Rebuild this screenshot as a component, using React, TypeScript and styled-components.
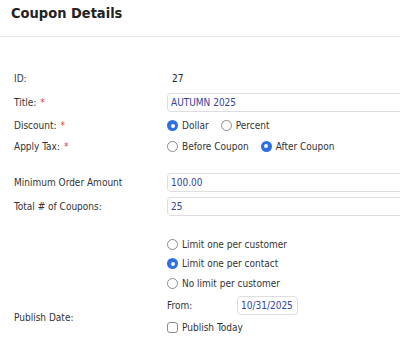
import React from "react";
import styled, { createGlobalStyle } from "styled-components";

const Global = createGlobalStyle`
  html, body { margin: 0; padding: 0; background: #fff; }
  body {
    font-family: "DejaVu Sans", Verdana, sans-serif;
    font-stretch: condensed;
    overflow: hidden;
  }
`;

const Page = styled.div`
  width: 400px;
  height: 348px;
  overflow: hidden;
  color: #333;
  font-size: 10px;
`;

const Header = styled.header`
  height: 37px;
  border-bottom: 1px solid #e6e6e6;
  padding-left: 11px;
  box-sizing: border-box;
`;

const Heading = styled.h1`
  margin: 0;
  font-size: 14.5px;
  line-height: 26px;
  font-weight: bold;
  color: #222;
`;

const Form = styled.div`
  padding: 29px 0 0 14px;
  display: flex;
  flex-direction: column;
`;

const Row = styled.div<{ $h: number; $gap?: number }>`
  display: grid;
  grid-template-columns: 153px 1fr;
  align-items: center;
  height: ${(p) => p.$h}px;
  margin-top: ${(p) => p.$gap ?? 0}px;
`;

const Label = styled.label<{ $shift?: number }>`
  color: #333;
  white-space: nowrap;
  padding-top: ${(p) => p.$shift ?? 0}px;
`;

const Req = styled.span`
  color: #d9453b;
  margin-left: 4px;
`;

const Value = styled.span`
  padding-left: 5px;
  color: #222;
`;

const TextInput = styled.div<{ $w?: number }>`
  box-sizing: border-box;
  width: ${(p) => p.$w ?? 260}px;
  height: 19px;
  border: 1px solid #dedede;
  border-radius: 4px;
  padding: 0 3px;
  display: flex;
  align-items: center;
  color: #33449a;
  background: #fff;
`;

const Options = styled.div`
  display: flex;
  align-items: center;
  gap: 12px;
`;

const Option = styled.span`
  display: inline-flex;
  align-items: center;
  gap: 4px;
  white-space: nowrap;
  color: #333;
`;

const Radio = styled.span<{ $checked?: boolean }>`
  box-sizing: border-box;
  width: 11px;
  height: 11px;
  border-radius: 50%;
  border: ${(p) => (p.$checked ? "none" : "1px solid #8a8a8a")};
  background: ${(p) => (p.$checked ? "#2f6fe4" : "#fff")};
  display: inline-flex;
  align-items: center;
  justify-content: center;
  &::after {
    content: "";
    display: ${(p) => (p.$checked ? "block" : "none")};
    width: 4px;
    height: 4px;
    border-radius: 50%;
    background: #fff;
  }
`;

const Check = styled.span`
  box-sizing: border-box;
  width: 11px;
  height: 11px;
  border-radius: 3px;
  border: 1px solid #8a8a8a;
  background: #fff;
`;

const Group = styled.div`
  display: grid;
  grid-template-columns: 153px 1fr;
  align-items: center;
`;

const Stack = styled.div`
  display: flex;
  flex-direction: column;
`;

const SubRow = styled.div<{ $h: number }>`
  height: ${(p) => p.$h}px;
  display: grid;
  grid-template-columns: 70px auto;
  align-items: center;
  justify-items: start;
`;

export default function App() {
  return (
    <Page>
      <Global />
      <Header>
        <Heading>Coupon Details</Heading>
      </Header>
      <Form>
        <Row $h={24}>
          <Label>ID:</Label>
          <Value>27</Value>
        </Row>
        <Row $h={25}>
          <Label>
            Title:<Req>*</Req>
          </Label>
          <TextInput>AUTUMN 2025</TextInput>
        </Row>
        <Row $h={21}>
          <Label>
            Discount:<Req>*</Req>
          </Label>
          <Options>
            <Option>
              <Radio $checked />
              Dollar
            </Option>
            <Option>
              <Radio />
              Percent
            </Option>
          </Options>
        </Row>
        <Row $h={20}>
          <Label>
            Apply Tax:<Req>*</Req>
          </Label>
          <Options>
            <Option>
              <Radio />
              Before Coupon
            </Option>
            <Option>
              <Radio $checked />
              After Coupon
            </Option>
          </Options>
        </Row>
        <Row $h={23} $gap={15}>
          <Label>Minimum Order Amount</Label>
          <TextInput>100.00</TextInput>
        </Row>
        <Row $h={24}>
          <Label>Total # of Coupons:</Label>
          <TextInput>25</TextInput>
        </Row>
        <Row $h={20} $gap={16}>
          <span />
          <Option>
            <Radio />
            Limit one per customer
          </Option>
        </Row>
        <Row $h={19}>
          <span />
          <Option>
            <Radio $checked />
            Limit one per contact
          </Option>
        </Row>
        <Row $h={20}>
          <span />
          <Option>
            <Radio />
            No limit per customer
          </Option>
        </Row>
        <Group>
          <Label $shift={3}>Publish Date:</Label>
          <Stack>
            <SubRow $h={24}>
              <Label>From:</Label>
              <TextInput $w={61}>10/31/2025</TextInput>
            </SubRow>
            <SubRow $h={21}>
              <Option>
                <Check />
                Publish Today
              </Option>
            </SubRow>
          </Stack>
        </Group>
      </Form>
    </Page>
  );
}
